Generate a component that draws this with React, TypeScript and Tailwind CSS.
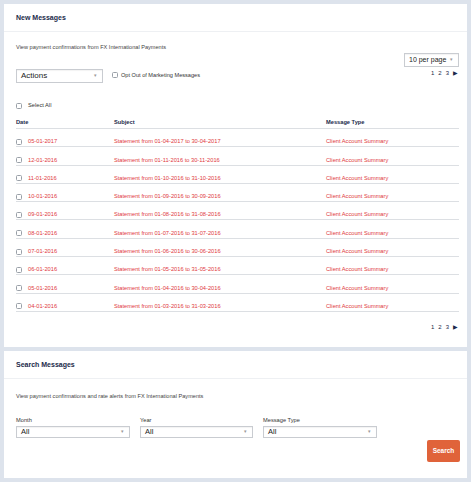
const rows = [
  ["05-01-2017", "Statement from 01-04-2017 to 30-04-2017"],
  ["12-01-2016", "Statement from 01-11-2016 to 30-11-2016"],
  ["11-01-2016", "Statement from 01-10-2016 to 31-10-2016"],
  ["10-01-2016", "Statement from 01-09-2016 to 30-09-2016"],
  ["09-01-2016", "Statement from 01-08-2016 to 31-08-2016"],
  ["08-01-2016", "Statement from 01-07-2016 to 31-07-2016"],
  ["07-01-2016", "Statement from 01-06-2016 to 30-06-2016"],
  ["06-01-2016", "Statement from 01-05-2016 to 31-05-2016"],
  ["05-01-2016", "Statement from 01-04-2016 to 30-04-2016"],
  ["04-01-2016", "Statement from 01-03-2016 to 31-03-2016"],
];

function Box() {
  return <span className="inline-block h-[6px] w-[6px] shrink-0 rounded-[1.5px] border border-[#9aa0a8] bg-white" />;
}

function Select({ label, className }: { label: string; className: string }) {
  return (
    <div
      className={`flex items-center justify-between border border-[#c9ccd1] bg-white pl-[4px] pr-[5px] text-[#222] shadow-[inset_0_1px_1px_rgba(0,0,0,0.05)] ${className}`}
    >
      <span>{label}</span>
      <span className="text-[5px] text-[#999]">▾</span>
    </div>
  );
}

function Pager() {
  return (
    <div className="flex items-center justify-end gap-[4px] text-[6px] leading-[7px] text-[#1b2a4a]">
      <span>1</span>
      <span>2</span>
      <span>3</span>
      <span className="text-[5.5px]">▶</span>
    </div>
  );
}

export default function App() {
  return (
    <div className="flex h-[482px] w-[471px] flex-col gap-[4px] bg-[#dde3ec] p-[4px] font-['Liberation_Sans',Arial,sans-serif]">
      <section className="h-[343px] shrink-0 bg-white">
        <div className="flex h-[28px] items-center border-b border-[#eef0f3] px-[12px] pt-[2px]">
          <h2 className="text-[7px] font-bold text-[#1b2a4a]">New Messages</h2>
        </div>
        <div className="pl-[12px] pr-[8px]">
          <p className="mt-[12px] text-[5.6px] leading-[7px] text-[#444]">
            View payment confirmations from FX International Payments
          </p>
          <div className="mt-[2px] flex justify-end">
            <Select label="10 per page" className="h-[14px] w-[55px] text-[7px]" />
          </div>
          <div className="mt-[2px] flex items-start justify-between">
            <div className="flex items-center gap-[9px]">
              <Select label="Actions" className="h-[14px] w-[87px] text-[8px]" />
              <div className="-mt-[2px] flex items-center gap-[3px] text-[5.6px] leading-[7px] text-[#333]">
                <Box />
                <span>Opt Out of Marketing Messages</span>
              </div>
            </div>
            <div className="mt-[1px] pr-[1px]">
              <Pager />
            </div>
          </div>
          <div className="mt-[19px] flex items-center gap-[6px] text-[5.7px] leading-[7px] text-[#333]">
            <Box />
            <span>Select All</span>
          </div>
          <div className="mt-[8px] flex h-[12px] items-center border-b border-[#dcdfe3] text-[5.7px] font-bold text-[#1b2a4a]">
            <span className="w-[98px]">Date</span>
            <span className="w-[212px]">Subject</span>
            <span>Message Type</span>
          </div>
          {rows.map(([date, subject]) => (
            <div
              key={subject}
              className="flex h-[18.3px] items-end border-b border-[#dcdfe3] pb-[1px] text-[5.7px] leading-[7px] text-[#e0393e]"
            >
              <span className="flex w-[98px] items-center gap-[6px]">
                <Box />
                {date}
              </span>
              <span className="w-[212px]">{subject}</span>
              <span>Client Account Summary</span>
            </div>
          ))}
          <div className="mt-[12px] pr-[1px]">
            <Pager />
          </div>
        </div>
      </section>
      <section className="flex-1 bg-white">
        <div className="flex h-[28px] items-center border-b border-[#eef0f3] px-[12px] pt-[2px]">
          <h2 className="text-[7px] font-bold text-[#1b2a4a]">Search Messages</h2>
        </div>
        <div className="pl-[12px] pr-[7px]">
          <p className="mt-[14px] text-[5.6px] leading-[7px] text-[#444]">
            View payment confirmations and rate alerts from FX International Payments
          </p>
          <div className="mt-[17px] flex gap-[10px]">
            <div>
              <div className="mb-[2px] text-[5.7px] leading-[7px] text-[#333]">Month</div>
              <Select label="All" className="h-[12px] w-[114px] text-[7.5px]" />
            </div>
            <div>
              <div className="mb-[2px] text-[5.7px] leading-[7px] text-[#333]">Year</div>
              <Select label="All" className="h-[12px] w-[113px] text-[7.5px]" />
            </div>
            <div>
              <div className="mb-[2px] text-[5.7px] leading-[7px] text-[#333]">Message Type</div>
              <Select label="All" className="h-[12px] w-[114px] text-[7.5px]" />
            </div>
          </div>
          <div className="mt-[2px] flex justify-end">
            <button className="h-[22px] w-[33px] rounded-[2px] bg-[#e0633a] text-[6.5px] font-bold text-white">
              Search
            </button>
          </div>
        </div>
      </section>
    </div>
  );
}
